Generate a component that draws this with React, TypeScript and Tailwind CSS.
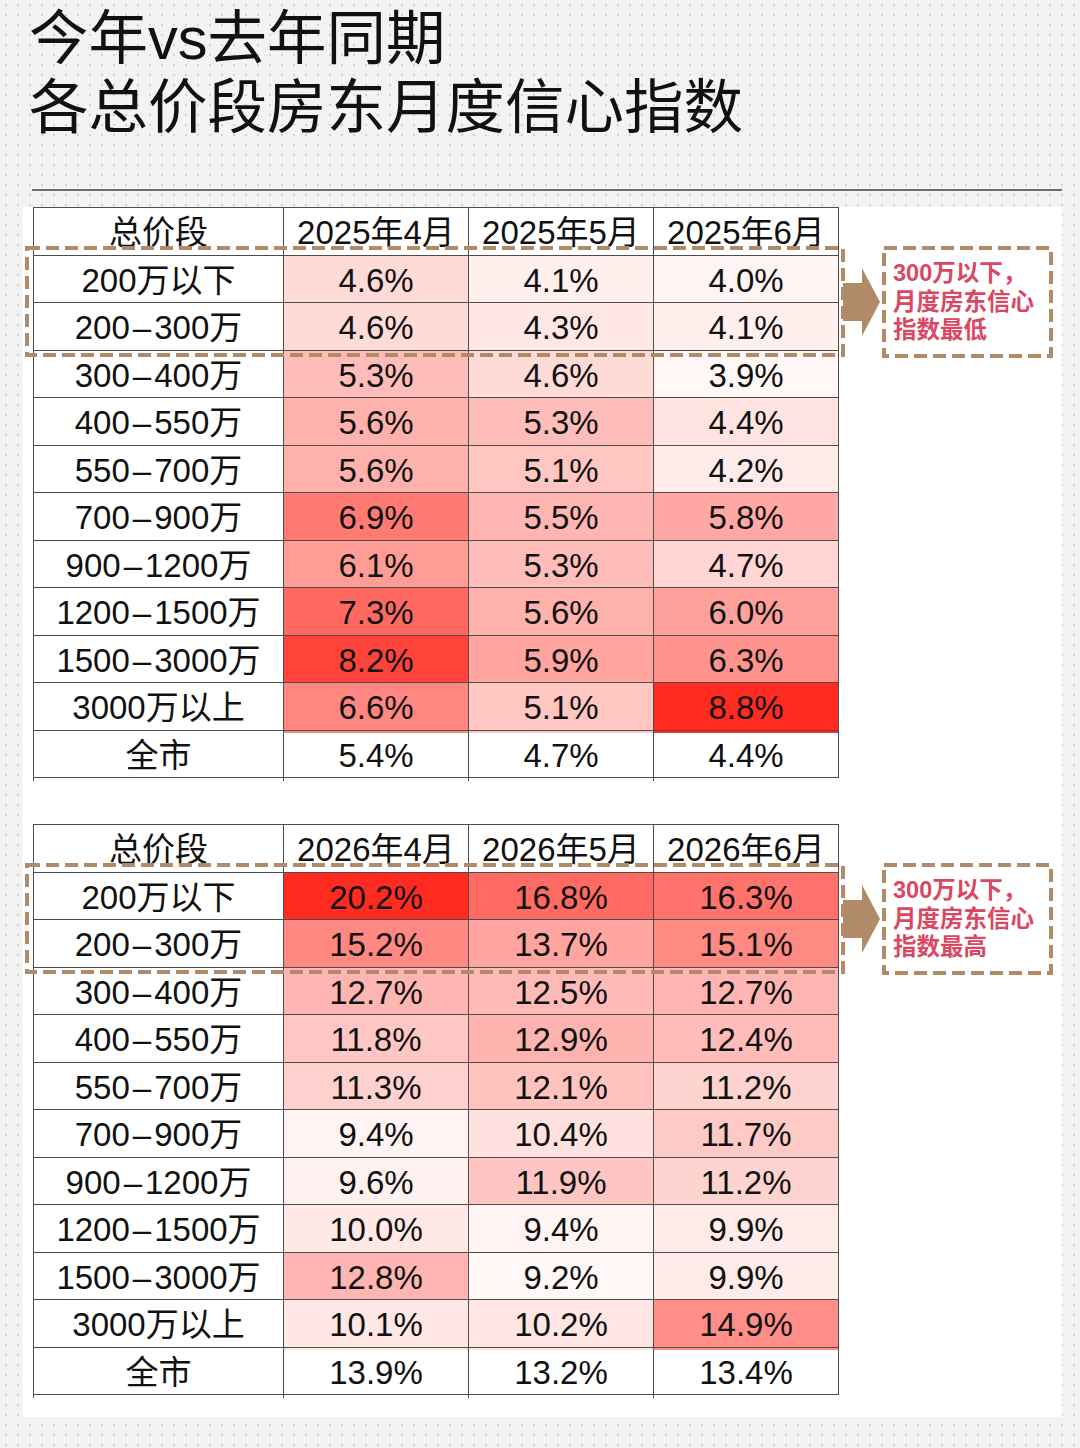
const FONT = '"Liberation Sans", "Noto Sans CJK SC", sans-serif';

type Row = { label: string; values: number[] };

interface TableData {
  months: string[];
  rows: Row[];
  total: number[];
  note: string[];
}

const TABLES: TableData[] = [
  {
    months: ['2025年4月', '2025年5月', '2025年6月'],
    rows: [
      { label: '200万以下', values: [4.6, 4.1, 4.0] },
      { label: '200-300万', values: [4.6, 4.3, 4.1] },
      { label: '300-400万', values: [5.3, 4.6, 3.9] },
      { label: '400-550万', values: [5.6, 5.3, 4.4] },
      { label: '550-700万', values: [5.6, 5.1, 4.2] },
      { label: '700-900万', values: [6.9, 5.5, 5.8] },
      { label: '900-1200万', values: [6.1, 5.3, 4.7] },
      { label: '1200-1500万', values: [7.3, 5.6, 6.0] },
      { label: '1500-3000万', values: [8.2, 5.9, 6.3] },
      { label: '3000万以上', values: [6.6, 5.1, 8.8] },
    ],
    total: [5.4, 4.7, 4.4],
    note: ['300万以下，', '月度房东信心', '指数最低'],
  },
  {
    months: ['2026年4月', '2026年5月', '2026年6月'],
    rows: [
      { label: '200万以下', values: [20.2, 16.8, 16.3] },
      { label: '200-300万', values: [15.2, 13.7, 15.1] },
      { label: '300-400万', values: [12.7, 12.5, 12.7] },
      { label: '400-550万', values: [11.8, 12.9, 12.4] },
      { label: '550-700万', values: [11.3, 12.1, 11.2] },
      { label: '700-900万', values: [9.4, 10.4, 11.7] },
      { label: '900-1200万', values: [9.6, 11.9, 11.2] },
      { label: '1200-1500万', values: [10.0, 9.4, 9.9] },
      { label: '1500-3000万', values: [12.8, 9.2, 9.9] },
      { label: '3000万以上', values: [10.1, 10.2, 14.9] },
    ],
    total: [13.9, 13.2, 13.4],
    note: ['300万以下，', '月度房东信心', '指数最高'],
  },
];

// white -> red, like a spreadsheet colour scale
const heat = (v: number, min: number, max: number) => {
  const t = (v - min) / (max - min);
  const g = Math.round(248 - t * (248 - 42));
  const b = Math.round(247 - t * (247 - 32));
  return `rgb(255, ${g}, ${b})`;
};

const Label = ({ text }: { text: string }) => {
  const parts = text.split('-');
  if (parts.length === 1) return <>{text}</>;
  return (
    <>
      {parts[0]}
      <span className="mx-[3px]">–</span>
      {parts[1]}
    </>
  );
};

const Cell = ({ children, color }: { children: React.ReactNode; color?: string }) => (
  <div
    className="flex items-center justify-center border-l border-t border-[#4d4d4d] whitespace-nowrap"
    style={color ? { backgroundColor: color } : undefined}
  >
    {children}
  </div>
);

const Arrow = () => (
  <svg width="38" height="68" viewBox="0 0 38 68">
    <path d="M0 15 H19 V0 L37 34 L19 68 V53 H0 Z" fill="#b18b68" />
  </svg>
);

const DashFrame = ({ w, h }: { w: number; h: number }) => (
  <svg className="absolute inset-0" width={w} height={h} viewBox={`0 0 ${w} ${h}`}>
    <rect
      x="2"
      y="2"
      width={w - 4}
      height={h - 4}
      fill="none"
      stroke="#b18b68"
      strokeWidth="4"
      strokeDasharray="13 6"
    />
  </svg>
);

const GRID = 'grid grid-cols-[250px_185px_185px_185px]';

const HeatTable = ({ data }: { data: TableData }) => {
  const all = data.rows.flatMap((r) => r.values);
  const min = Math.min(...all);
  const max = Math.max(...all);

  return (
    <div className="relative w-[806px]">
      <div className="border-r border-b border-[#4d4d4d] text-[33px] text-[#111]">
        <div className={`${GRID} h-[48px] bg-white`}>
          <Cell>总价段</Cell>
          {data.months.map((m) => (
            <Cell key={m}>{m}</Cell>
          ))}
        </div>
        {data.rows.map((row, idx) => (
          <div key={row.label} className={`${GRID} ${idx % 2 === 0 ? 'h-[47px]' : 'h-[48px]'}`}>
            <Cell>
              <Label text={row.label} />
            </Cell>
            {row.values.map((v, i) => (
              <Cell key={i} color={heat(v, min, max)}>
                {v.toFixed(1)}%
              </Cell>
            ))}
          </div>
        ))}
        <div className={`${GRID} h-[47px] bg-white`}>
          <Cell>全市</Cell>
          {data.total.map((v, i) => (
            <Cell key={i}>{v.toFixed(1)}%</Cell>
          ))}
        </div>
      </div>

      {/* annotation: arrow, dashed highlight and note */}
      <div className="absolute left-[810px] top-[61px]">
        <Arrow />
      </div>
      <div className="absolute left-[-8px] top-[39px] w-[820px] h-[111px]">
        <DashFrame w={820} h={111} />
      </div>
      <div className="absolute left-[849px] top-[39px] w-[171px] h-[112px] pl-[11px] pt-[13px]">
        <DashFrame w={171} h={112} />
        {data.note.map((line) => (
          <div
            key={line}
            className="relative text-[23.5px] leading-[28.5px] font-bold text-[#db4763] whitespace-nowrap"
          >
            {line}
          </div>
        ))}
      </div>
    </div>
  );
};

export default function App() {
  return (
    <div
      className="w-[1080px] h-[1448px] overflow-hidden bg-[#f3f3f3] bg-[radial-gradient(circle,#d2d2d2_1px,transparent_1.3px)] bg-[length:12px_10px]"
      style={{ fontFamily: FONT }}
    >
      <div className="pt-[4px] pl-[29px] text-[59.5px] leading-[69px] text-[#111]">
        <div>今年vs去年同期</div>
        <div>各总价段房东月度信心指数</div>
      </div>

      <div className="mt-[47px] ml-[32px] mr-[18px] h-[2px] bg-[#6e6e6e]" />

      <div className="mt-[16px] ml-[22px] w-[1040px] h-[1210px] bg-white pl-[11px] flex flex-col gap-[46px]">
        {TABLES.map((t) => (
          <HeatTable key={t.months[0]} data={t} />
        ))}
      </div>
    </div>
  );
}
